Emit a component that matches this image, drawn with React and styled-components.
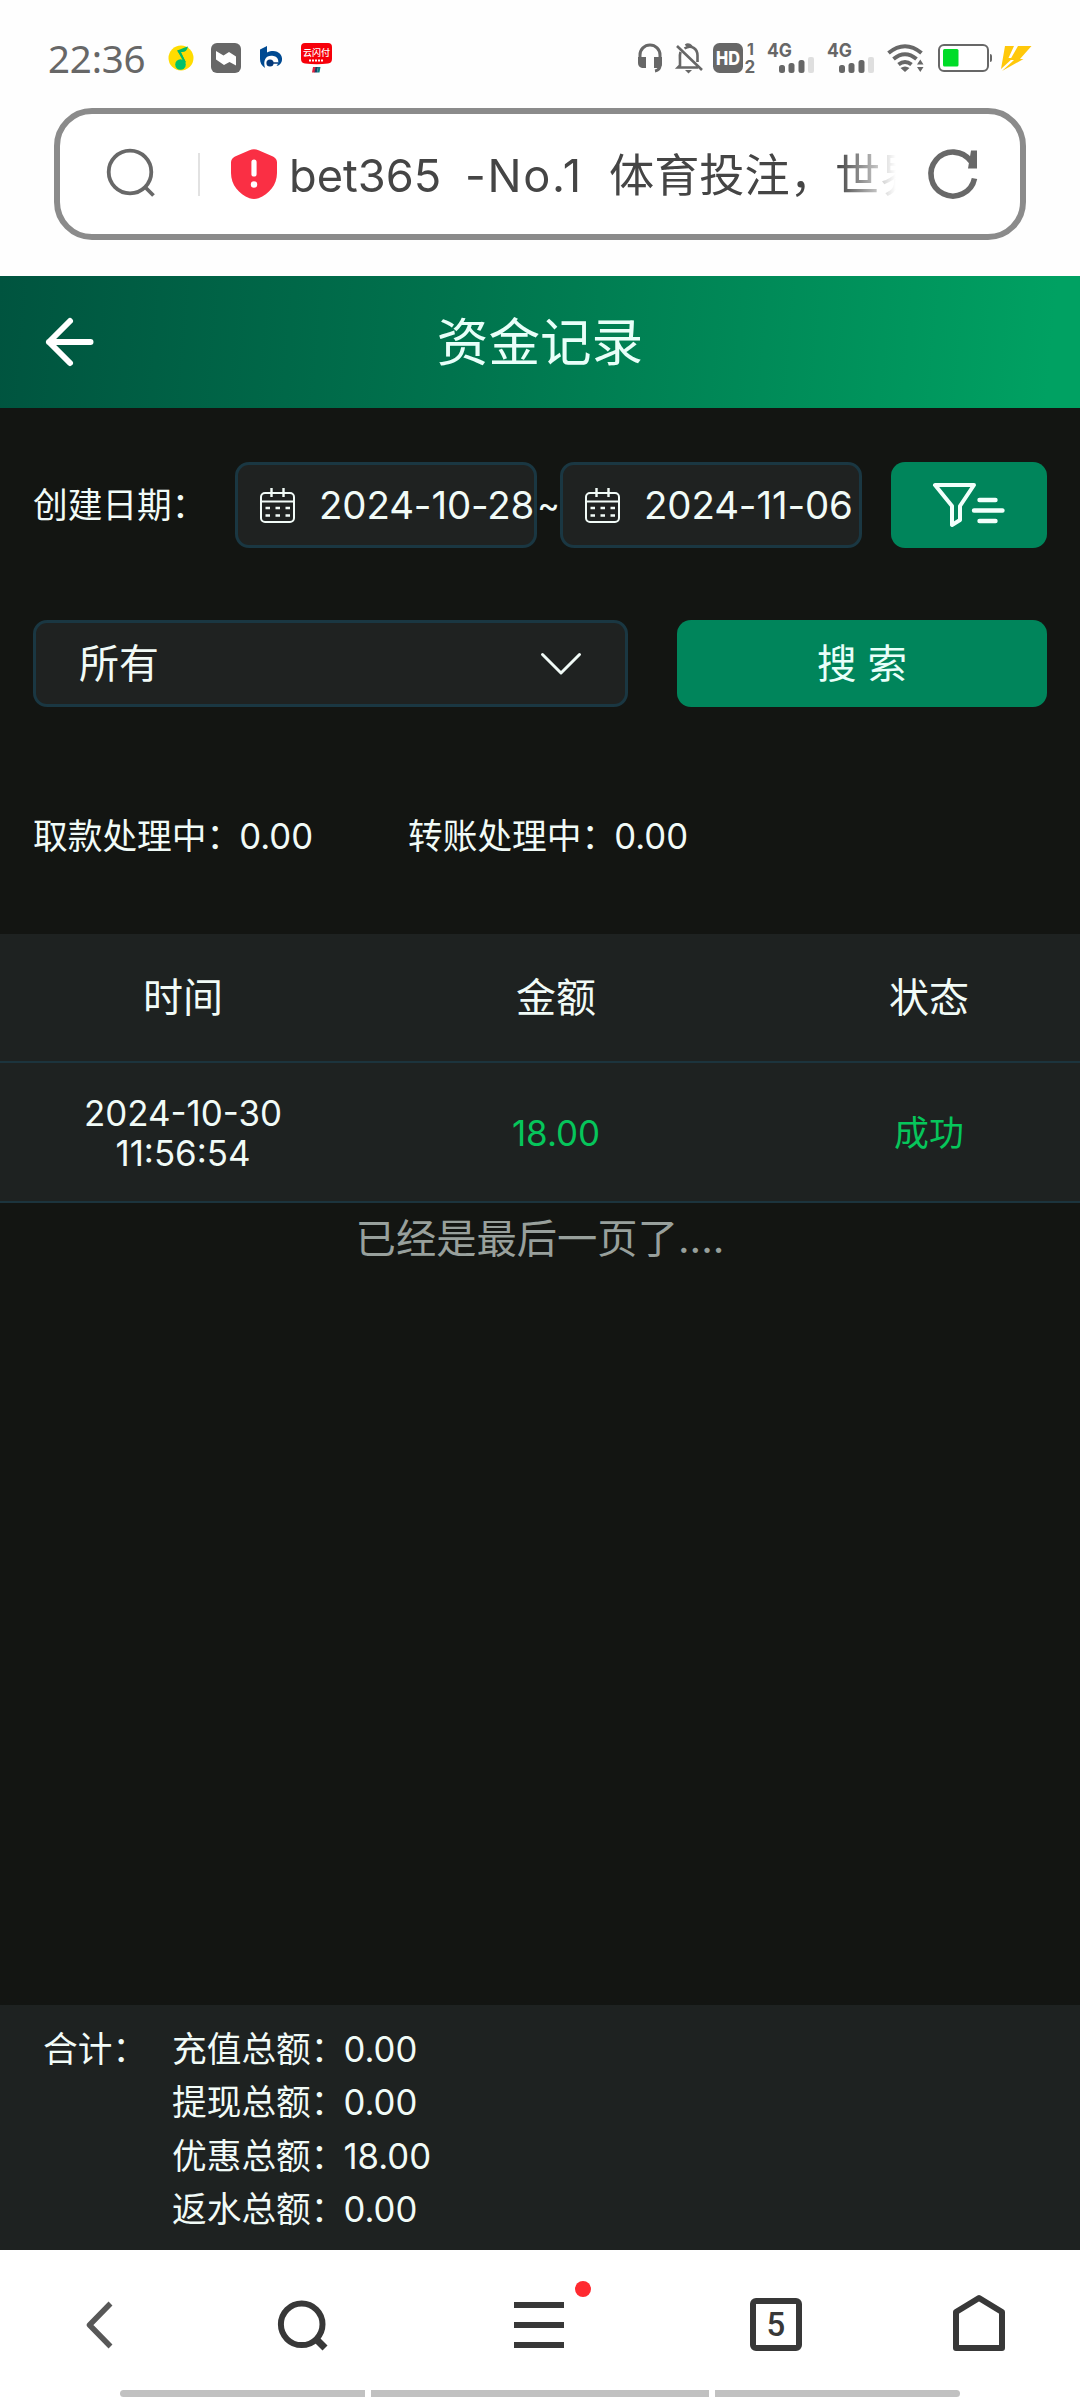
import React from 'react';
import styled, { createGlobalStyle } from 'styled-components';

const GlobalStyle = createGlobalStyle`
  * {
    box-sizing: border-box;
  }
  body {
    margin: 0;
    background: #131512;
    font-family: Inter, "Noto Sans CJK SC", sans-serif;
    -webkit-font-smoothing: antialiased;
  }
`;

const Screen = styled.div`
  width: 1080px;
  height: 2400px;
  display: flex;
  flex-direction: column;
  background: #131512;
  color: #f1fbf7;
  overflow: hidden;
`;

/* phone status bar */
const StatusBar = styled.div`
  height: 108px;
  flex-shrink: 0;
  padding: 43px 48px 35px 48px;
  background: #fefefe;
  display: flex;
  align-items: center;
  justify-content: space-between;
`;

const StatusGroup = styled.div`
  display: flex;
  align-items: center;
  height: 30px;
`;

const Clock = styled.div`
  width: 120px;
  font-family: "Noto Sans", sans-serif;
  font-size: 38.5px;
  line-height: 30px;
  letter-spacing: -0.2px;
  color: #676767;
`;

const Icon = styled.svg`
  display: block;
  flex-shrink: 0;
  overflow: visible;
  margin-left: ${props => props.$left || 0}px;
`;

/* browser address bar */
const AddressArea = styled.div`
  height: 168px;
  flex-shrink: 0;
  padding: 0 54px;
  background: #fefefe;
`;

const AddressBar = styled.div`
  height: 132px;
  border: 6px solid #8b8b8b;
  border-radius: 38px;
  background: #fff;
  display: flex;
  align-items: center;
  padding: 0 42px 0 47px;
`;

const AddressDivider = styled.div`
  width: 2px;
  height: 43px;
  margin-left: 43px;
  background: #e2e2e2;
`;

const PageName = styled.div`
  width: 609px;
  margin-left: 10px;
  padding: 4px 0 0 2px;
  display: flex;
  overflow: hidden;
  white-space: nowrap;
  font-size: 45.2px;
  line-height: 64px;
  color: #454545;
  mask-image: linear-gradient(to right, #000 550px, transparent 609px);
`;

const NamePart = styled.span`
  flex-shrink: 0;
  width: ${props => props.$width || 'auto'};
  letter-spacing: ${props => props.$spacing || 'normal'};
`;

const Reload = styled(Icon)`
  margin-left: auto;
`;

/* page header */
const Header = styled.header`
  height: 132px;
  flex-shrink: 0;
  display: grid;
  grid-template-columns: 140px 1fr 140px;
  align-items: center;
  background: linear-gradient(95deg, #00543f 0%, #00734d 42%, #00a162 97%);
`;

const HeaderTitle = styled.h1`
  margin: 0;
  text-align: center;
  font-size: 51.6px;
  font-weight: 400;
  line-height: 70px;
  color: #e8fff9;
`;

/* filters */
const Filters = styled.section`
  flex-shrink: 0;
  padding: 54px 33px 0;
`;

const DateRow = styled.div`
  display: flex;
  align-items: center;
  height: 86px;
`;

const Label = styled.div`
  width: 202px;
  font-size: 34.7px;
  line-height: 40px;
  padding-bottom: 1px;
  white-space: nowrap;
`;

const Field = styled.div`
  border: 3px solid #1a3742;
  border-radius: 14px;
  background: #1f2221;
  display: flex;
  align-items: center;
`;

const DateField = styled(Field)`
  width: 302px;
  height: 86px;
  padding-left: 22px;
  font-size: 38.4px;
  letter-spacing: -0.1px;
  line-height: 40px;
  white-space: nowrap;

  svg {
    margin-right: 24px;
  }
`;

const Tilde = styled.div`
  width: 23px;
  font-size: 34px;
  line-height: 40px;
  display: flex;
  justify-content: center;
`;

const Button = styled.button`
  border: none;
  border-radius: 14px;
  padding: 0;
  background: #00855b;
  color: #e8fff9;
  font-family: inherit;
  font-size: 39.5px;
  line-height: 40px;
  display: flex;
  align-items: center;
  justify-content: center;
`;

const FilterButton = styled(Button)`
  width: 156px;
  height: 86px;
  margin-left: auto;
`;

const SearchRow = styled.div`
  display: flex;
  justify-content: space-between;
  margin-top: 72px;
`;

const SelectField = styled(Field)`
  width: 595px;
  height: 87px;
  padding: 0 44px 0 43px;
  justify-content: space-between;
  font-size: 40px;
  line-height: 40px;
`;

const SearchButton = styled(Button)`
  width: 370px;
  height: 87px;
`;

const Pending = styled.div`
  display: flex;
  margin-top: 99px;
  height: 59px;
  line-height: 60px;
  font-size: 34.7px;
`;

const PendingItem = styled.div`
  width: 375px;
  white-space: nowrap;
`;

const Amount = styled.span`
  margin-left: -2px;
`;

/* records table */
const Table = styled.div`
  flex-shrink: 0;
  margin-top: 69px;
  background: #1e2221;
  overflow: hidden;
`;

const Row = styled.div`
  width: 1112px;
  height: ${props => (props.$head ? 129 : 140)}px;
  padding-top: 1px;
  border-bottom: 2px solid #1c343d;
  display: grid;
  grid-template-columns: 366px 380px 366px;
  align-items: center;
  justify-items: center;
  text-align: center;
  font-size: ${props => (props.$head ? 40 : 34.9)}px;
  line-height: 40px;
`;

const Cell = styled.div`
  max-width: 220px;
  color: ${props => (props.$success ? '#06c65b' : 'inherit')};
`;

const EndNote = styled.div`
  flex: 1;
  padding-top: 6px;
  text-align: center;
  font-size: 40.3px;
  line-height: 60px;
  color: #98a09c;
`;

/* totals */
const Totals = styled.section`
  height: 245px;
  flex-shrink: 0;
  padding: 18px 0 0 43px;
  display: flex;
  background: #1e2221;
  font-size: 34.7px;
  line-height: 53.3px;
`;

const TotalsLabel = styled.div`
  width: 129px;
`;

/* browser navigation */
const BottomBar = styled.nav`
  height: 150px;
  flex-shrink: 0;
  background: #fff;
  display: flex;
  flex-direction: column;
  justify-content: space-between;
`;

const NavIcons = styled.div`
  height: 140px;
  padding-left: 86px;
  padding-top: 9px;
  display: flex;
  align-items: center;
`;

const MenuButton = styled.div`
  position: relative;
  margin-left: 186px;
`;

const Badge = styled.span`
  position: absolute;
  top: -21px;
  right: -27px;
  width: 16px;
  height: 16px;
  border-radius: 50%;
  background: #ff2a30;
`;

const TabCount = styled.div`
  width: 52px;
  height: 53px;
  margin-left: 186px;
  border: 6px solid #383838;
  border-radius: 6px;
  display: flex;
  align-items: center;
  justify-content: center;
  font-family: Roboto, sans-serif;
  font-size: 33px;
  font-weight: 500;
  line-height: 40px;
  color: #383838;
`;

const Gestures = styled.div`
  display: flex;
  gap: 6px;
  padding: 0 120px 3px;
`;

const GestureBar = styled.div`
  flex: ${props => props.$grow};
  height: 7px;
  background: #c1c1c1;
  border-radius: ${props => props.$radius || 0};
`;

const MusicIcon = () => (
  <Icon width="26" height="26" viewBox="0 0 26 26">
    <circle cx="13" cy="13" r="12.5" fill="#ffdc00" />
    <path d="M9 5.500c3-1 6-2.500 11-4-1 4-3 6-7 5.500l5 11" fill="#00b96b" />
    <path d="M10.500 5.500l6.500 12" stroke="#00b96b" strokeWidth="2" />
    <circle cx="12.500" cy="19.500" r="5.300" fill="#00c16a" />
  </Icon>
);

const WaveIcon = () => (
  <Icon $left={17} width="30" height="30" viewBox="0 0 30 30">
    <rect width="30" height="30" rx="6" fill="#676767" />
    <path d="M5 8l7.500 4.500L18 9l7 4.500v9L18.500 19 13 22l-8-5.500z" fill="#fff" />
  </Icon>
);

const BankIcon = () => (
  <Icon $left={19} width="23" height="24" viewBox="0 0 23 24">
    <path d="M0 3.500L7 0v6.500C16 2 23 8 22 14c-.6 4-3 5.500-5.500 6 3-3 2.500-9-3-10C7 8.500 2.500 13 5 22 1.500 19.500 0 16.500 0 13z" fill="#004a92" />
    <circle cx="10" cy="17" r="3.600" fill="#073a7a" />
    <path d="M10 17h8" stroke="#073a7a" strokeWidth="1.500" />
  </Icon>
);

const PayIcon = () => (
  <Icon $left={18} width="31" height="30" viewBox="0 0 31 30">
    <path d="M4 0h23q4 0 4 4v12q0 4-4 4.500-11 1.500-23 0Q0 20 0 16V4q0-4 4-4z" fill="#f6000a" />
    <text x="15.500" y="13" textAnchor="middle" fontSize="9" fontWeight="500" fill="#fff">云闪付</text>
    <path d="M8 17.500h15" stroke="#fff" strokeWidth="1.800" strokeDasharray="2 1" />
    <path d="M12 24h3l-1 5.500h-3z" fill="#e0243c" />
    <path d="M14.500 24h2.500l-1 5.500h-2.500z" fill="#1b3e66" />
    <path d="M17 24h2.500l-1 5.500h-2.500z" fill="#087d80" />
  </Icon>
);

const HeadphoneIcon = () => (
  <Icon width="24" height="30" viewBox="0 0 24 30">
    <path d="M2 20v-8a10 10 0 0 1 20 0v10c0 4-2 5.500-5 6" fill="none" stroke="#676767" strokeWidth="3" />
    <path d="M0 14h8v11H4q-4-1-4-5zM16 14h8v7q0 4-4 4h-4z" fill="#676767" />
  </Icon>
);

const BellOffIcon = () => (
  <Icon $left={14} width="26" height="30" viewBox="0 0 26 30" fill="none" stroke="#676767" strokeWidth="2.600">
    <path d="M1 3l25 24M4.500 9C3.500 12 4 15 4 18v4.500L2 24.500h20M8.500 5.500c7-4.500 13 .5 13 7V19" />
    <path d="M9.500 2.500q3-2 6 1" />
    <path d="M9 27h7l-3.500 3.500z" fill="#676767" stroke="none" />
  </Icon>
);

const HdIcon = () => (
  <Icon $left={11} width="42" height="30" viewBox="0 0 42 30" fontFamily="Inter" fontWeight="800">
    <rect width="30" height="30" rx="6.500" fill="#676767" />
    <text x="15" y="22" textAnchor="middle" fontSize="19" textLength="24" lengthAdjust="spacingAndGlyphs" fill="#fff">HD</text>
    <text x="34" y="12" fontSize="16" fontWeight="700" fill="#676767">1</text>
    <text x="31.500" y="29.500" fontSize="17" fontWeight="700" fill="#676767">2</text>
  </Icon>
);

const SignalIcon = ({ left }) => (
  <Icon $left={left} width="47" height="30" viewBox="0 0 47 30">
    <text x="0" y="14" fontFamily="Inter" fontSize="19" fontWeight="700" textLength="25" lengthAdjust="spacingAndGlyphs" fill="#676767">4G</text>
    <rect x="12" y="22" width="6" height="8" rx="2.500" fill="#676767" />
    <rect x="21.500" y="20" width="6" height="10" rx="2.500" fill="#676767" />
    <rect x="31.500" y="17" width="6" height="13" rx="2.500" fill="#676767" />
    <rect x="41" y="14" width="6" height="16" rx="2" fill="#dfdfdf" />
  </Icon>
);

const WifiIcon = () => (
  <Icon $left={13} width="37" height="28" viewBox="0 0 37 28">
    <g fill="none" stroke="#676767" strokeWidth="4">
      <path d="M1.500 9Q18 -4.500 34.500 9" />
      <path d="M6.500 15Q18 5.500 29.500 15" />
      <path d="M11.500 20.500Q18 15.500 24.500 20.500" />
    </g>
    <path d="M13.500 24q4.500-3 9 0L18 28zM30 20.500h6.500l-3.200-5zM30 23h6.500l-3.200 5z" fill="#676767" />
  </Icon>
);

const BatteryIcon = () => (
  <Icon $left={14} width="54" height="28" viewBox="0 0 54 28">
    <rect x="1" y="1" width="49" height="26" rx="5" fill="#fff" stroke="#676767" strokeWidth="2" />
    <rect x="5" y="5" width="15.500" height="17.500" rx="1.500" fill="#00dc28" />
    <path d="M52 10q2 0 2 2v4q0 2-2 2z" fill="#676767" />
  </Icon>
);

const BoltIcon = () => (
  <Icon $left={9} width="31" height="25" viewBox="0 0 31 25">
    <path d="M4 0h9L7.500 12h4.500L0 23z" fill="#ffc80a" />
    <path d="M17 0h13.500L19 13h3.500L1 25 13 14H9z" fill="#ffc80a" />
  </Icon>
);

const CalendarIcon = () => (
  <Icon width="35" height="35" viewBox="0 0 35 35" fill="none" stroke="#f1fbf7" strokeWidth="2">
    <rect x="1" y="5" width="33" height="29" rx="4" />
    <path d="M1 13.500h33" />
    <path d="M11.500 0v9M23.500 0v9" strokeWidth="2.400" />
    <path d="M5.500 20h4.500M15.500 20h4.500M25.500 20h4.500M5.500 27.500h4.500M15.500 27.500h4.500M25.500 27.500h4.500" strokeWidth="2.400" />
  </Icon>
);

const FilterIcon = () => (
  <Icon width="72" height="46" viewBox="0 0 72 46" fill="none" stroke="#f1fffb" strokeWidth="4" strokeLinecap="round" strokeLinejoin="round">
    <path d="M2 3h39L27 24v14l-8 5V24z" />
    <path d="M46.500 18h16M41 28.500h28.500M46.500 39h16" strokeWidth="4.400" />
  </Icon>
);

const pending = [
  { label: '取款处理中', value: '0.00' },
  { label: '转账处理中', value: '0.00' }
];

const records = [
  { id: 1, date: '2024-10-30', time: '11:56:54', amount: '18.00', status: '成功' }
];

const totals = [
  { label: '充值总额', value: '0.00' },
  { label: '提现总额', value: '0.00' },
  { label: '优惠总额', value: '18.00' },
  { label: '返水总额', value: '0.00' }
];

const App = () => {
  return (
    <Screen>
      <GlobalStyle />
      <StatusBar>
        <StatusGroup>
          <Clock>22:36</Clock>
          <MusicIcon />
          <WaveIcon />
          <BankIcon />
          <PayIcon />
        </StatusGroup>
        <StatusGroup>
          <HeadphoneIcon />
          <BellOffIcon />
          <HdIcon />
          <SignalIcon left={12} />
          <SignalIcon left={13} />
          <WifiIcon />
          <BatteryIcon />
          <BoltIcon />
        </StatusGroup>
      </StatusBar>

      <AddressArea>
        <AddressBar>
          <Icon width="48" height="50" viewBox="0 0 48 50" fill="none" stroke="#686868" strokeWidth="3.800">
            <circle cx="23" cy="23" r="21.300" />
            <path d="M37.500 37.500l9 9" />
          </Icon>
          <AddressDivider />
          <Icon $left={31} width="46" height="50" viewBox="0 0 46 50">
            <path d="M18.500 1.200q4.500-2 9 0L42 7.500q4 2 4 6V24c0 12-8 21-18.500 25.200q-4.500 1.500-9 0C8 45 0 36 0 24V13.500q0-4 4-6z" fill="#fa2f44" />
            <path d="M23 13v12" stroke="#fff" strokeWidth="5.200" strokeLinecap="round" />
            <circle cx="23" cy="35.500" r="3.200" fill="#fff" />
          </Icon>
          <PageName>
            <NamePart $width="176px">bet365</NamePart>
            <NamePart $width="144px" $spacing="1.700px">-No.1</NamePart>
            <NamePart>体育投注，世界</NamePart>
          </PageName>
          <Reload width="50" height="50" viewBox="0 0 50 50" fill="none" stroke="#686868" strokeWidth="5.600">
            <path d="M46.500 29.500A22 22 0 1 1 43 12.500" />
            <path d="M43 1.500h6v18H40z" fill="#686868" stroke="none" />
          </Reload>
        </AddressBar>
      </AddressArea>

      <Header>
        <Icon $left={46} width="48" height="48" viewBox="0 0 48 48" fill="none" stroke="#fff" strokeWidth="6" strokeLinecap="round" strokeLinejoin="round">
          <path d="M24 3L3 24l21 21M3 24h41.500" />
        </Icon>
        <HeaderTitle>资金记录</HeaderTitle>
      </Header>

      <Filters>
        <DateRow>
          <Label>创建日期：</Label>
          <DateField>
            <CalendarIcon />
            2024-10-28
          </DateField>
          <Tilde>~</Tilde>
          <DateField>
            <CalendarIcon />
            2024-11-06
          </DateField>
          <FilterButton>
            <FilterIcon />
          </FilterButton>
        </DateRow>
        <SearchRow>
          <SelectField>
            所有
            <Icon width="40" height="22" viewBox="0 0 40 22" fill="none" stroke="#f1fbf7" strokeWidth="3" strokeLinecap="round" strokeLinejoin="round">
              <path d="M1.500 1.500L20 20 38.500 1.500" />
            </Icon>
          </SelectField>
          <SearchButton>搜 索</SearchButton>
        </SearchRow>
        <Pending>
          {pending.map((item) => (
            <PendingItem key={item.label}>
              {item.label}：<Amount>{item.value}</Amount>
            </PendingItem>
          ))}
        </Pending>
      </Filters>

      <Table>
        <Row $head>
          <Cell>时间</Cell>
          <Cell>金额</Cell>
          <Cell>状态</Cell>
        </Row>
        {records.map((record) => (
          <Row key={record.id}>
            <Cell>{record.date} {record.time}</Cell>
            <Cell $success>{record.amount}</Cell>
            <Cell $success>{record.status}</Cell>
          </Row>
        ))}
      </Table>
      <EndNote>已经是最后一页了....</EndNote>

      <Totals>
        <TotalsLabel>合计：</TotalsLabel>
        <div>
          {totals.map((item) => (
            <div key={item.label}>
              {item.label}：<Amount>{item.value}</Amount>
            </div>
          ))}
        </div>
      </Totals>

      <BottomBar>
        <NavIcons>
          <Icon width="27" height="48" viewBox="0 0 27 48" fill="none" stroke="#585858" strokeWidth="5.500">
            <path d="M24.500 2.500L3.500 24l21 21.500" strokeLinejoin="round" />
          </Icon>
          <Icon $left={165} width="50" height="50" viewBox="0 0 50 50" fill="none" stroke="#383838" strokeWidth="6">
            <circle cx="23.700" cy="24.300" r="20.800" />
            <path d="M37 38l10 10" strokeWidth="7" />
          </Icon>
          <MenuButton>
            <Icon width="50" height="46" viewBox="0 0 50 46" stroke="#383838" strokeWidth="6">
              <path d="M0 3h50M0 23h50M0 43h50" />
            </Icon>
            <Badge />
          </MenuButton>
          <TabCount>5</TabCount>
          <Icon $left={151} width="52" height="60" viewBox="0 2 52 60" fill="none" stroke="#383838" strokeWidth="6" strokeLinejoin="round">
            <path d="M3 19L26 5l23 14v36H3z" />
          </Icon>
        </NavIcons>
        <Gestures>
          <GestureBar $grow={245} $radius="4px 0 0 4px" />
          <GestureBar $grow={338} />
          <GestureBar $grow={245} $radius="0 4px 4px 0" />
        </Gestures>
      </BottomBar>
    </Screen>
  );
};

export default App;
